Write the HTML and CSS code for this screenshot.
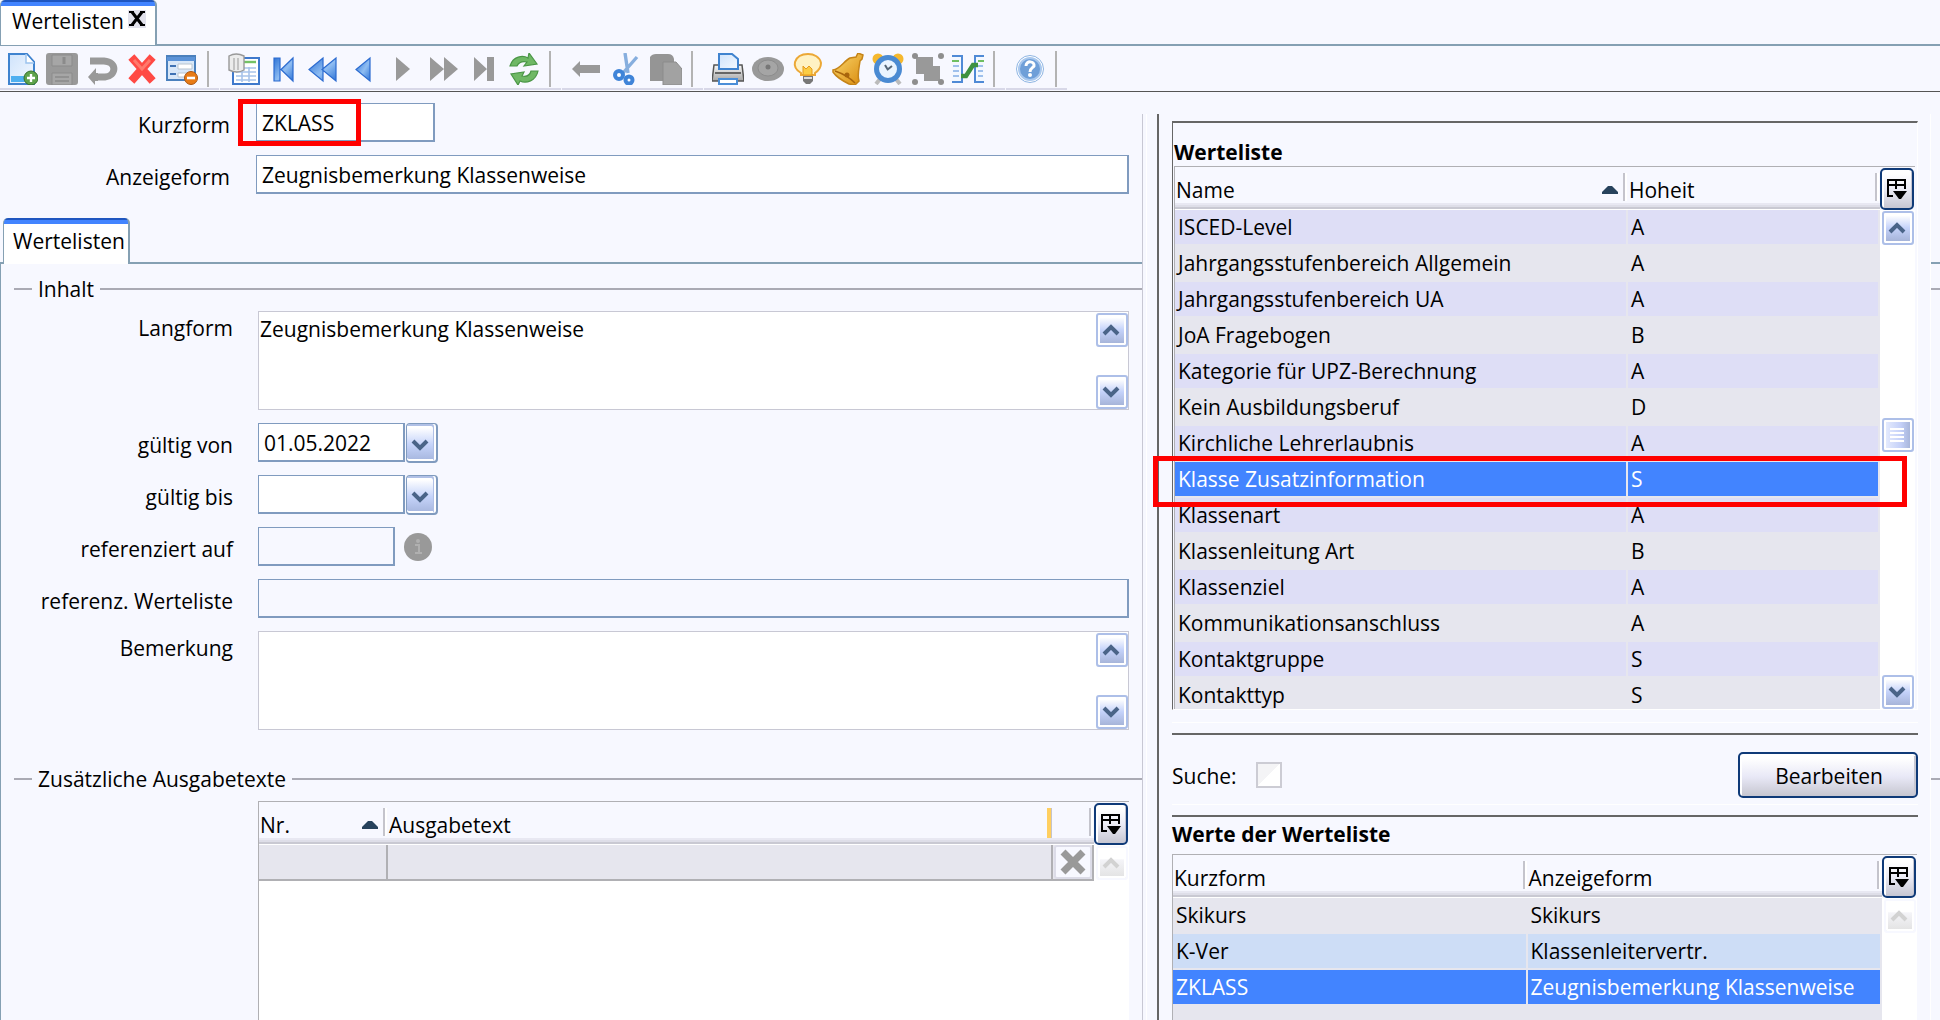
FILE: index.html
```html
<!DOCTYPE html>
<html lang="de">
<head>
<meta charset="utf-8">
<title>Wertelisten</title>
<link rel="stylesheet" href="styles.css">
</head>
<body>
<svg class="defs" aria-hidden="true">
  <defs>
    <linearGradient id="blue" x1="0" y1="0" x2="1" y2="1"><stop offset="0" stop-color="#2f74d6"/><stop offset=".55" stop-color="#8fbdf2"/><stop offset="1" stop-color="#2f74d6"/></linearGradient>
    <linearGradient id="paper" x1="0" y1="0" x2="1" y2="1"><stop offset="0" stop-color="#cfe3fb"/><stop offset="1" stop-color="#f4f9ff"/></linearGradient>
    <linearGradient id="gold" x1="0" y1="0" x2="1" y2="1"><stop offset="0" stop-color="#fbd970"/><stop offset="1" stop-color="#d98a0c"/></linearGradient>
    <linearGradient id="silver" x1="0" y1="0" x2="0" y2="1"><stop offset="0" stop-color="#fafafa"/><stop offset="1" stop-color="#a4a4a4"/></linearGradient>
    <symbol id="up" viewBox="0 0 18 12"><path d="M2 10 9 3l7 7" fill="none" stroke="currentColor" stroke-width="4"/></symbol>
    <symbol id="down" viewBox="0 0 18 12"><path d="M2 2l7 7 7-7" fill="none" stroke="currentColor" stroke-width="4"/></symbol>
    <symbol id="columns" viewBox="0 0 20 20"><path d="M6 17H1V1h17v9M1 6h17M9 1v9" fill="none" stroke="#000" stroke-width="2"/><path d="M6 12h14l-6 8h-2z" fill="#000"/></symbol>
    <symbol id="sort" viewBox="0 0 16 8"><path d="M0 8V6l6-6h4l6 6v2z" fill="#27425c"/></symbol>
  </defs>
</svg>

<div class="app">
  <header class="tabbar">
    <div class="tab tab-main">
      <span>Wertelisten</span>
      <button class="close" type="button" aria-label="Schließen"><svg viewBox="0 0 16 16"><path d="M3 1l10 13M13 1 3 14" stroke="#000" stroke-width="3"/><path d="M0 1h5M11 1h5M0 14h5M11 14h5" stroke="#000" stroke-width="2"/></svg></button>
    </div>
  </header>

  <div class="toolbar" role="toolbar">
    <div class="group first">
      <button type="button" aria-label="Neu"><svg viewBox="0 0 32 32"><path d="M3 1h18l7 8v22H3z" fill="url(#paper)" stroke="#3f83cf" stroke-width="2"/><path d="M5 23h14v6H5z" fill="#4fb0f0"/><path d="M20 1v9h8" fill="#fff" stroke="#9cc4ee" stroke-width="1.5"/><circle cx="25" cy="25" r="7" fill="#5da24a" stroke="#35702a"/><path d="M25 21v8M21 25h8" stroke="#fff" stroke-width="2.4"/></svg></button>
      <button type="button" aria-label="Speichern"><svg viewBox="0 0 32 32"><rect y="0" width="32" height="32" rx="3" fill="#999"/><path d="M6 2h20v11H6zM6 20h20v12H6z" fill="#a6a6a6" stroke="#8b8b8b"/><path d="M9 24h14M9 28h14" stroke="#8b8b8b" stroke-width="1.5"/><path d="M18 4v7" stroke="#8b8b8b" stroke-width="3"/></svg></button>
      <button type="button" aria-label="Rückgängig"><svg viewBox="0 0 32 32"><path d="M4 8h14c14 1 12 15 1 16H8" fill="none" stroke="#999" stroke-width="7"/><path d="M2 24l8-9v5h2v8H9v4z" fill="#999"/></svg></button>
      <button type="button" aria-label="Löschen"><svg viewBox="0 0 32 32"><path d="M8 7l16 18M24 7 8 25" stroke="#ff4a44" stroke-width="8" stroke-linecap="square"/><path d="M8 7l8 9 8-9" stroke="#ff7a6c" stroke-width="3" fill="none"/></svg></button>
      <button type="button" aria-label="Formular leeren"><svg viewBox="0 0 32 32"><rect x="1" y="3" width="28" height="24" fill="#d8e7f8" stroke="#4a80bd" stroke-width="2"/><path d="M1 4h28v4H1z" fill="#5b93d8"/><path d="M12 11h14v5H12zM12 20h10v4H12z" fill="#fff" stroke="#b9c4cf"/><path d="M4 13h6M4 21h6" stroke="#3f72b4" stroke-width="2"/><circle cx="25" cy="25" r="6.5" fill="#e87b16" stroke="#a95510"/><path d="M21 25h8" stroke="#fff" stroke-width="2.6"/></svg></button>
    </div>
    <div class="group">
      <button type="button" aria-label="Liste"><svg viewBox="0 0 32 32"><rect x="5" y="5" width="26" height="26" fill="#fff" stroke="#3f79cc" stroke-width="2"/><path d="M16 9h12" stroke="#74c265" stroke-width="2.4"/><path d="M8 15h20M8 19h20M8 23h20M8 27h20M14 14v15M21 14v15" stroke="#a8c4ea" stroke-width="1.6"/><path d="M1 3q7-4 15 0v14q-7 4-15 0z" fill="#ececec" stroke="#999" stroke-width="1.4"/><path d="M6 5v12M10 5v12" stroke="#b5b5b5" stroke-width="1.5"/></svg></button>
      <button type="button" aria-label="Erster"><svg viewBox="0 0 32 32"><path d="M6 5h6v23H6zM25 5v23L13 16.500z" fill="url(#blue)" stroke="#2b6bd0" stroke-width="1.2"/></svg></button>
      <button type="button" aria-label="Seite zurück"><svg viewBox="0 0 32 32"><path d="M15 5v23L1 16.500zM28 5v23L14 16.500z" fill="url(#blue)" stroke="#2b6bd0" stroke-width="1.200"/></svg></button>
      <button type="button" aria-label="Zurück"><svg viewBox="0 0 32 32"><path d="M22 5v23L8 16.500z" fill="url(#blue)" stroke="#2b6bd0" stroke-width="1.200"/></svg></button>
      <button type="button" aria-label="Weiter"><svg viewBox="0 0 32 32"><path d="M8 4v24l14-12z" fill="#999"/></svg></button>
      <button type="button" aria-label="Seite weiter"><svg viewBox="0 0 32 32"><path d="M2 4v24l14-12zM16 4v24l14-12z" fill="#999"/></svg></button>
      <button type="button" aria-label="Letzter"><svg viewBox="0 0 32 32"><path d="M6 4v24l13-12zM19 4h7v24h-7z" fill="#999"/></svg></button>
      <button type="button" aria-label="Aktualisieren"><svg viewBox="0 0 32 32"><path d="M2 13C5 3 15 2 20 5l1-5 8 11-13 2 3-4c-5-1-8 0-10 4zM30 18C28 28 18 31 12 28l-2 4-7-11 13-2-2 4c5 1 8-1 9-5z" fill="#6fb865" stroke="#4a9646" stroke-width="1.2"/></svg></button>
    </div>
    <div class="group">
      <button type="button" aria-label="Verschieben"><svg viewBox="0 0 32 32"><path d="M2 16l8-8v4h20v8H10v4z" fill="#999"/></svg></button>
      <button type="button" aria-label="Ausschneiden"><svg viewBox="0 0 32 32"><path d="M15 0l3 20M27 4 13 20" stroke="#86aede" stroke-width="3.400"/><circle cx="9" cy="22" r="4" fill="#fff" stroke="#3f84d8" stroke-width="4"/><circle cx="19" cy="27" r="3.500" fill="#fff" stroke="#3f84d8" stroke-width="4"/></svg></button>
      <button type="button" aria-label="Einfügen"><svg viewBox="0 0 32 32"><path d="M0 4q2-3 6-3h12q5 0 6 5v22H0z" fill="#959595"/><path d="M13 9h13l6 7v16H13z" fill="#a2a2a2" stroke="#8b8b8b"/></svg></button>
    </div>
    <div class="group">
      <button type="button" aria-label="Drucken"><svg viewBox="0 0 32 32"><path d="M2 12h28l2 16H0z" fill="url(#silver)" stroke="#555" stroke-width="1.500"/><path d="M7 16V1h13l6 5v10z" fill="url(#paper)" stroke="#3f83cf" stroke-width="2"/><path d="M3 20h26" stroke="#666" stroke-width="2"/><path d="M7 26h18v5H7z" fill="#fff" stroke="#4a8ed8" stroke-width="2"/></svg></button>
      <button type="button" aria-label="Vorschau"><svg viewBox="0 0 32 32"><ellipse cx="16" cy="16" rx="16" ry="12" fill="#999"/><ellipse cx="16" cy="15" rx="10" ry="8" fill="#a5a5a5" stroke="#8c8c8c"/><circle cx="16" cy="14" r="2.500" fill="#777"/></svg></button>
      <button type="button" aria-label="Hinweis"><svg viewBox="0 0 32 32"><path d="M9 20C4 17 2 13 3 9 5 3 10 1 16 1s12 3 13 9c0 5-3 8-6 10v2H9z" fill="#fff2c4" stroke="#eca836" stroke-width="2"/><path d="M11 13l3 3 3-3 3 3v6h-9z" fill="#fbcd45" stroke="#e69a1f"/><path d="M11 23h10v5l-3 3h-4l-3-3z" fill="#777"/><path d="M12 25h8" stroke="#ddd" stroke-width="2"/></svg></button>
      <button type="button" aria-label="Erinnerung"><svg viewBox="0 0 32 32"><path d="M1 17C8 16 12 8 18 5l6-1 2-4 5 2-1 4-2 2c-1 8-3 14-1 20l-4 4-6-1c-6-3-12-6-16-12z" fill="url(#gold)" stroke="#c58418" stroke-width="1.500"/><path d="M3 18c6 2 14 6 20 12" fill="none" stroke="#a8650c" stroke-width="1.500"/><circle cx="15" cy="22" r="2.500" fill="#a8650c"/></svg></button>
      <button type="button" aria-label="Wecker"><svg viewBox="0 0 32 32"><circle cx="6" cy="6" r="5.500" fill="#f5b82e"/><circle cx="26" cy="6" r="5.500" fill="#f5b82e"/><path d="M8 26l-4 5M24 26l4 5" stroke="#bbb" stroke-width="4"/><circle cx="16" cy="16" r="11.500" fill="#eaf4ff" stroke="#4a8ad2" stroke-width="5"/><path d="M16 17l-3-5M15 17l5-4" stroke="#567" stroke-width="2"/></svg></button>
      <button type="button" aria-label="Gruppieren"><svg viewBox="0 0 32 32"><path d="M4 4h17v9h7v15H12v-7H4z" fill="#999"/><g fill="#8e8e8e"><circle cx="3" cy="3" r="3"/><circle cx="29" cy="3" r="3"/><circle cx="3" cy="29" r="3"/><circle cx="29" cy="29" r="3"/></g></svg></button>
      <button type="button" aria-label="Vergleichen"><svg viewBox="0 0 32 32"><path d="M0 3h10v26H0M32 3H23v26h9" fill="#f3f8ff" stroke="#4f8ad6" stroke-width="2"/><path d="M0 8h7M26 8h6" stroke="#6fbf62" stroke-width="2"/><path d="M1 13h6M1 18h6M1 23h6M26 13h5M26 18h5M26 23h5" stroke="#9fc0ec" stroke-width="2"/><path d="M9 23h5l7-11h5" fill="none" stroke="#3d9140" stroke-width="4.500"/></svg></button>
    </div>
    <div class="group">
      <button type="button" aria-label="Hilfe"><svg viewBox="0 0 32 32"><circle cx="16" cy="16" r="13.500" fill="#fff" stroke="#8db4e2"/><circle cx="16" cy="16" r="11" fill="#6f9fd8" stroke="#a9c8ee" stroke-width="2"/><path d="M12 13c0-6 9-5 8 0-1 2-4 2-4 6" fill="none" stroke="#fff" stroke-width="3"/><circle cx="16" cy="22" r="2" fill="#fff"/></svg></button>
    </div>
  </div>

  <main class="main">
    <section class="left">
      <form class="form head-form">
        <label for="kurz">Kurzform</label>
        <div class="field marked"><input id="kurz" class="w-kurz" value="ZKLASS"><span class="marker marker-field"></span></div>
        <label for="anzeige">Anzeigeform</label>
        <div class="field"><input id="anzeige" value="Zeugnisbemerkung Klassenweise"></div>
      </form>

      <div class="tab tab-sub">Wertelisten</div>
      <div class="panel">
        <h2 class="legend">Inhalt</h2>
        <form class="form body-form">
          <label class="top" for="lang">Langform</label>
          <div class="area">
            <textarea id="lang">Zeugnisbemerkung Klassenweise</textarea>
            <div class="area-scroll">
              <button class="sb" type="button" aria-label="Nach oben"><svg><use href="#up"/></svg></button>
              <button class="sb" type="button" aria-label="Nach unten"><svg><use href="#down"/></svg></button>
            </div>
          </div>
          <label for="von">gültig von</label>
          <div class="field"><input id="von" class="w-date" value="01.05.2022"><button class="drop" type="button" aria-label="Kalender"><svg><use href="#down"/></svg></button></div>
          <label for="bis">gültig bis</label>
          <div class="field"><input id="bis" class="w-date"><button class="drop" type="button" aria-label="Kalender"><svg><use href="#down"/></svg></button></div>
          <label for="ref">referenziert auf</label>
          <div class="field"><input id="ref" class="w-ref ro" readonly><svg class="info" viewBox="0 0 28 28"><circle cx="14" cy="14" r="14" fill="#999"/><circle cx="14" cy="8" r="2" fill="#b0b0b0"/><path d="M11 12h4v8M11 20h7" fill="none" stroke="#b0b0b0" stroke-width="2"/></svg></div>
          <label for="refw">referenz. Werteliste</label>
          <div class="field"><input id="refw" class="ro" readonly></div>
          <label class="top" for="bem">Bemerkung</label>
          <div class="area">
            <textarea id="bem"></textarea>
            <div class="area-scroll">
              <button class="sb" type="button" aria-label="Nach oben"><svg><use href="#up"/></svg></button>
              <button class="sb" type="button" aria-label="Nach unten"><svg><use href="#down"/></svg></button>
            </div>
          </div>
        </form>
        <h2 class="legend legend-2">Zusätzliche Ausgabetexte</h2>
        <div class="grid texts">
          <div class="grid-view">
            <table>
              <colgroup><col class="c-nr"><col><col class="c-mark"></colgroup>
              <thead><tr><th>Nr.<svg class="sort"><use href="#sort"/></svg></th><th class="insert">Ausgabetext</th><th></th></tr></thead>
              <tbody><tr><td></td><td></td><td class="del-cell"><button class="del" type="button" aria-label="Zeile löschen"><svg viewBox="0 0 26 26"><path d="M3 3l20 20M23 3 3 23" stroke="#999" stroke-width="7"/></svg></button></td></tr></tbody>
            </table>
          </div>
          <div class="grid-side">
            <button class="colbtn" type="button" aria-label="Spalten"><svg><use href="#columns"/></svg></button>
            <div class="track"><button class="sb off" type="button" disabled aria-label="Nach oben"><svg><use href="#up"/></svg></button></div>
          </div>
        </div>
      </div>
    </section>

    <div class="splitter"></div>

    <section class="right">
      <div class="list-box">
        <h2 class="title">Werteliste</h2>
        <div class="grid values">
          <div class="grid-view">
            <table>
              <colgroup><col class="c-name"><col></colgroup>
              <thead><tr><th>Name<svg class="sort"><use href="#sort"/></svg></th><th>Hoheit</th></tr></thead>
              <tbody>
                <tr><td>ISCED-Level</td><td>A</td></tr>
                <tr><td>Jahrgangsstufenbereich Allgemein</td><td>A</td></tr>
                <tr><td>Jahrgangsstufenbereich UA</td><td>A</td></tr>
                <tr><td>JoA Fragebogen</td><td>B</td></tr>
                <tr><td>Kategorie für UPZ-Berechnung</td><td>A</td></tr>
                <tr><td>Kein Ausbildungsberuf</td><td>D</td></tr>
                <tr><td>Kirchliche Lehrerlaubnis</td><td>A</td></tr>
                <tr class="selected"><td>Klasse Zusatzinformation</td><td>S</td></tr>
                <tr><td>Klassenart</td><td>A</td></tr>
                <tr><td>Klassenleitung Art</td><td>B</td></tr>
                <tr><td>Klassenziel</td><td>A</td></tr>
                <tr><td>Kommunikationsanschluss</td><td>A</td></tr>
                <tr><td>Kontaktgruppe</td><td>S</td></tr>
                <tr><td>Kontakttyp</td><td>S</td></tr>
              </tbody>
            </table>
          </div>
          <div class="grid-side">
            <button class="colbtn" type="button" aria-label="Spalten"><svg><use href="#columns"/></svg></button>
            <div class="track">
              <button class="sb" type="button" aria-label="Nach oben"><svg><use href="#up"/></svg></button>
              <button class="sb thumb" type="button" aria-label="Bildlauf"><svg viewBox="0 0 16 16"><path d="M1 2h14M1 6h14M1 10h14M1 14h14" stroke="#fff" stroke-width="2"/></svg></button>
              <button class="sb last" type="button" aria-label="Nach unten"><svg><use href="#down"/></svg></button>
            </div>
          </div>
        </div>
        <span class="marker marker-row"></span>
      </div>

      <div class="rule rule-1"></div>
      <div class="search">
        <label for="suche">Suche:</label>
        <input type="checkbox" id="suche">
        <button class="edit" type="button">Bearbeiten</button>
      </div>
      <div class="rule"></div>

      <h2 class="title title-2">Werte der Werteliste</h2>
      <div class="grid entries">
        <div class="grid-view">
          <table>
            <colgroup><col class="c-half"><col></colgroup>
            <thead><tr><th>Kurzform</th><th>Anzeigeform</th></tr></thead>
            <tbody>
              <tr><td>Skikurs</td><td>Skikurs</td></tr>
              <tr class="light"><td>K-Ver</td><td>Klassenleitervertr.</td></tr>
              <tr class="selected"><td>ZKLASS</td><td>Zeugnisbemerkung Klassenweise</td></tr>
            </tbody>
          </table>
        </div>
        <div class="grid-side">
          <button class="colbtn" type="button" aria-label="Spalten"><svg><use href="#columns"/></svg></button>
          <div class="track"><button class="sb off" type="button" disabled aria-label="Nach oben"><svg><use href="#up"/></svg></button></div>
        </div>
      </div>
    </section>

    <div class="edge"></div>
  </main>
</div>
</body>
</html>
```
FILE: styles.css
```css
* { box-sizing: border-box; }

:root {
  --bg: #f7f8ff;
  --frame: #85a0b3;
  --field: #809bbf;
  --dark: #666;
  --grid: #b0b0b4;
  --row: #e6e6ee;
  --select: #4284ff;
}

body {
  margin: 0;
  background: var(--bg);
  color: #000;
  font: 21px/29px "Open Sans", "Noto Sans", sans-serif;
}

button, input, textarea { font: inherit; color: inherit; margin: 0; padding: 0; }
button { display: flex; align-items: center; justify-content: center; background: none; border: 0; }
h2 { margin: 0; font-size: 21px; line-height: 29px; }
svg { display: block; }
.defs { position: absolute; width: 0; height: 0; }

.app { display: flex; flex-direction: column; min-height: 100vh; }

/* tabs */
.tabbar { display: flex; height: 46px; border-bottom: 2px solid var(--frame); }
.tab {
  display: flex;
  width: max-content;
  height: 46px;
  background: linear-gradient(#1f56c0 0 2px, var(--select) 2px 6px, #fff 6px);
  border: solid var(--frame);
  border-width: 0 2px 0 1px;
  border-radius: 5px 5px 0 0;
}
.tab-main { height: 45px; gap: 4px; padding: 7px 9px 0 11px; }
.tab-sub { position: relative; margin: 24px 0 -2px 3px; padding: 9px 3px 0 9px; }
.close { width: 18px; height: 18px; margin-top: 3px; background: #e2e2ec; }
.close svg { width: 16px; height: 16px; }

/* toolbar */
.toolbar { display: flex; gap: 1px; height: 46px; border-bottom: 1px solid #555; }
.group {
  display: flex;
  gap: 8px;
  height: 44px;
  padding: 7px 10px 0 8px;
  border-bottom: 2px solid #d8d8e8;
}
.group.first { padding-left: 6px; }
.group::after { content: ""; width: 2px; height: 36px; margin: -2px 0 0 1px; background: #b3b3b3; }
.group button, .group svg { width: 32px; height: 32px; }

/* page columns */
.main { display: flex; flex: 1; }
.left { display: flex; flex-direction: column; flex: 1142 0 0; min-width: 0; }
.right { display: flex; flex-direction: column; flex: 746 0 0; min-width: 0; padding-top: 29px; }
.splitter {
  width: 30px;
  margin-top: 22px;
  background:
    linear-gradient(#fff, #fff) 3px 0 / 1px 100% no-repeat,
    linear-gradient(var(--dark), var(--dark)) 14px 0 / 2px 100% no-repeat;
  border-left: 1px solid #c8c8d4;
}
.edge {
  width: 10px;
  margin: 22px 0 0 12px;
  border-left: 1px solid #fff;
  background:
    linear-gradient(var(--frame), var(--frame)) 0 148px / 100% 2px no-repeat,
    linear-gradient(#aaaab4, #aaaab4) 0 174px / 100% 2px no-repeat,
    linear-gradient(#aaaab4, #aaaab4) 0 664px / 100% 2px no-repeat;
}

/* forms */
.form { display: grid; row-gap: 13px; align-items: start; }
.head-form { grid-template-columns: 230px 1fr; column-gap: 26px; padding: 11px 13px 0 0; }
.body-form { grid-template-columns: 232px 1fr; column-gap: 25px; margin-top: 7px; padding-right: 13px; }
.form label { height: 39px; line-height: 45px; text-align: right; white-space: nowrap; }
.form label.top { line-height: 34px; }
.field { display: flex; height: 39px; }
.field input {
  width: 100%;
  height: 39px;
  padding: 2px 5px 0;
  background: #fff;
  border: solid var(--field);
  border-width: 1px 2px 2px 1px;
  border-radius: 0;
}
.field input.w-kurz { width: 179px; }
.field input.w-date { width: 147px; }
.field input.w-ref { width: 137px; }
.field input.ro { background: var(--bg); }
.info { width: 28px; height: 28px; margin: 6px 0 0 9px; }

.drop {
  width: 32px;
  height: 40px;
  margin-left: 1px;
  padding: 4px 4px 0 0;
  border: solid var(--field);
  border-width: 1px 2px 2px 1px;
  border-radius: 4px;
  box-shadow: inset -2px 0 #fff, inset -3px 2px #b0c0e6, inset 0 -2px #fff;
  background: linear-gradient(#fff 10%, #c6d4fa 55%, #a5b5dd);
}
.drop svg, .sb svg { width: 18px; height: 12px; color: #4a6488; }

.area { display: flex; height: 99px; background: #fff; border: 1px solid #c8c8d4; }
.area textarea {
  flex: 1;
  min-width: 0;
  padding: 2px 1px 0;
  line-height: 30px;
  background: #fff;
  border: 0;
  resize: none;
  overflow: hidden;
}
.area-scroll { display: flex; flex-direction: column; justify-content: space-between; padding: 1px 0 0; }

.sb {
  width: 32px;
  height: 34px;
  padding-right: 3px;
  border: 2px solid #adbfe8;
  border-radius: 3px;
  box-shadow: inset 0 0 0 2px #fff;
  background: linear-gradient(#fff 8%, #c4d2fa 50%, #a2b0d4);
}
.sb.off { background: linear-gradient(#fff 35%, #f4f4f8 40%, #e2e2e2); border-color: var(--bg); }
.sb.off svg { color: #d2d2d2; }
.sb.thumb { margin-top: 173px; background: linear-gradient(90deg, #e8eefe, #c4d0f8 60%, #a2b0d4); }
.sb.thumb svg { width: 16px; height: 16px; }
.sb.last { margin-top: auto; }

/* left panel */
.panel {
  display: flex;
  flex-direction: column;
  flex: 1;
  padding-top: 10px;
  border-top: 2px solid var(--frame);
  border-left: 1px solid var(--frame);
}
.legend { display: flex; align-items: center; gap: 6px; padding-left: 13px; font-weight: 400; line-height: 30px; }
.legend::before, .legend::after { content: ""; height: 2px; background: #aaaab4; }
.legend::before { width: 18px; }
.legend::after { flex: 1; }
.legend-2 { margin-top: 34px; }

/* data grids */
.grid { display: flex; border-top: 1px solid var(--grid); border-left: 1px solid var(--grid); }
.grid-view { flex: 1; min-width: 0; overflow: hidden; background: var(--row); }
.grid-side { display: flex; flex-direction: column; width: 35px; }
.track { display: flex; flex-direction: column; flex: 1; align-items: flex-end; padding: 1px 1px 0 0; background: #fff; }
.colbtn {
  width: 34px;
  height: 42px;
  margin-top: 1px;
  border: 2px solid #0f3a78;
  border-radius: 5px;
  box-shadow: inset 2px 2px #fff, inset -1px 0 #c4c4d0;
  background: linear-gradient(#fff 10%, #ececf6 50%, #c6c6d2);
}
.colbtn svg { width: 20px; height: 20px; }

table { width: 100%; table-layout: fixed; border-spacing: 0; }
.c-name { width: 453px; }
.c-half { width: 50%; }
.c-nr { width: 129px; }
.c-mark { width: 41px; }
th {
  position: relative;
  height: 43px;
  padding: 9px 0 5px 1px;
  text-align: left;
  font-weight: 400;
  background:
    linear-gradient(90deg, #c4c4cc 0 2px, #fff 2px 4px) right 1px top 6px / 4px 28px no-repeat,
    linear-gradient(#e8e8f2 0 2px, #dedee8 2px 4px, #c9c9d2 4px 6px, #fff 6px 7px) 0 100% / 100% 7px no-repeat,
    var(--bg);
}
th.insert {
  background:
    linear-gradient(90deg, #ffcf60 0 4px, #c4c4cc 4px 5px) right 1px top 6px / 5px 30px no-repeat,
    linear-gradient(#e8e8f2 0 2px, #dedee8 2px 4px, #c9c9d2 4px 6px, #fff 6px 7px) 0 100% / 100% 7px no-repeat,
    var(--bg);
}
.sort { position: absolute; top: 19px; right: 10px; width: 16px; height: 8px; }
td {
  height: 36px;
  padding: 0 0 0 3px;
  line-height: 34px;
  white-space: nowrap;
  overflow: hidden;
  border: solid var(--row);
  border-width: 0 2px 2px 0;
}
.values tbody tr:nth-child(odd) td { background: #dedef6; }
.light td { background: #cdddf6; }
.grid .selected td { background: var(--select); color: #fff; }

.texts { flex: 1; margin: 7px 13px 0 257px; }
.texts .grid-view { background: #fff; }
.texts td { padding: 0; background: var(--row); border-color: var(--grid); }
.texts .del-cell { line-height: 0; }
.del { width: 38px; height: 34px; margin: auto; border: 2px solid #dcdce8; border-radius: 3px; background: var(--bg); }
.del svg { width: 26px; height: 26px; }

/* right column */
.list-box {
  position: relative;
  border-top: 2px solid var(--dark);
  border-left: 1px solid var(--dark);
  border-bottom: 1px solid #fff;
  border-right: 1px solid #fff;
}
.title { padding: 15px 0 0 1px; }
.values { height: 543px; margin: -1px 2px 0 1px; }
.title-2 { padding: 3px 0 5px; }
.entries { flex: 1; margin-right: 1px; }

.rule { height: 13px; border-top: 1px solid #fff; border-bottom: 2px solid var(--dark); }
.rule-1 { margin-top: 12px; }
.search { display: flex; align-items: center; height: 69px; padding-top: 11px; }
.search label { width: 84px; padding-top: 2px; }
.search input {
  appearance: none;
  width: 26px;
  height: 26px;
  border: 2px solid #ccccd4;
  background: linear-gradient(135deg, #f4f4f6 50%, #fff 50%);
}
.edit {
  width: 180px;
  height: 46px;
  margin-left: auto;
  padding: 3px 0 0 2px;
  border: 2px solid #0f3a78;
  border-radius: 5px;
  box-shadow: inset 2px 2px #fff, inset -2px 0 #c8c8d2;
  background: linear-gradient(#fff 10%, #e8e8f6 55%, #c6c6d0);
}

/* highlight frames over the content */
.marked { position: relative; }
.marker { position: absolute; border: 5px solid #f00; pointer-events: none; }
.marker-field { left: -18px; top: -4px; width: 123px; height: 47px; }
.marker-row { left: -20px; right: 10px; top: 333px; height: 51px; }
```
